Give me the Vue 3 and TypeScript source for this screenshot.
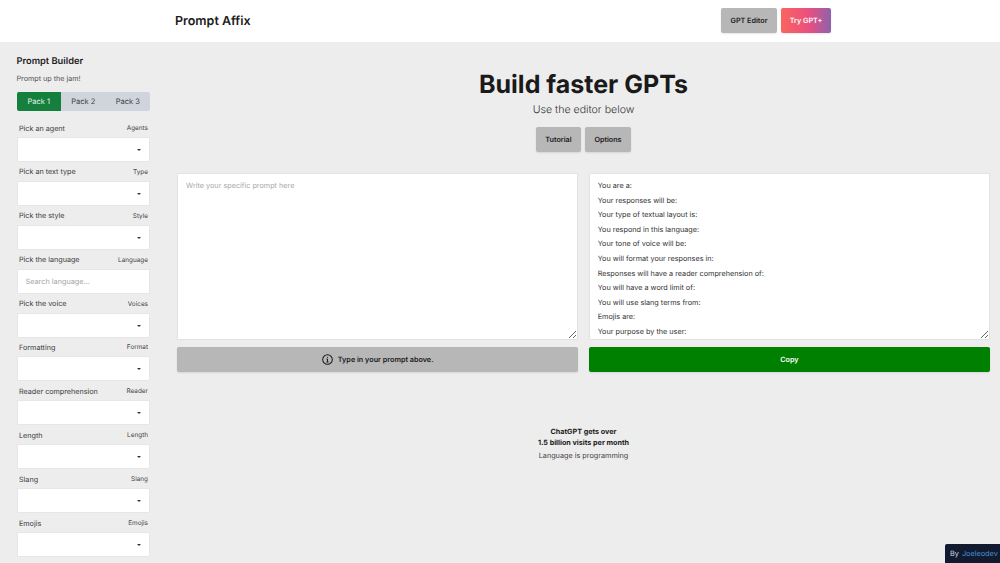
<script setup lang="ts">
interface Field { label: string; tag: string; input?: boolean }
const packs: string[] = ['Pack 1', 'Pack 2', 'Pack 3']
const fields: Field[] = [
  { label: 'Pick an agent', tag: 'Agents' },
  { label: 'Pick an text type', tag: 'Type' },
  { label: 'Pick the style', tag: 'Style' },
  { label: 'Pick the language', tag: 'Language', input: true },
  { label: 'Pick the voice', tag: 'Voices' },
  { label: 'Formatting', tag: 'Format' },
  { label: 'Reader comprehension', tag: 'Reader' },
  { label: 'Length', tag: 'Length' },
  { label: 'Slang', tag: 'Slang' },
  { label: 'Emojis', tag: 'Emojis' },
]
const output: string = [
  'You are a:',
  'Your responses will be:',
  'Your type of textual layout is:',
  'You respond in this language:',
  'Your tone of voice will be:',
  'You will format your responses in:',
  'Responses will have a reader comprehension of:',
  'You will have a word limit of:',
  'You will use slang terms from:',
  'Emojis are:',
  'Your purpose by the user:',
].join('\n')
</script>

<template>
  <div class="page">
    <header class="topbar">
      <span class="brand">Prompt Affix</span>
      <div class="top-actions">
        <button class="btn grey top-btn editor">GPT Editor</button>
        <button class="btn gradient top-btn">Try GPT+</button>
      </div>
    </header>
    <div class="body">
      <aside class="sidebar">
        <h2 class="side-title">Prompt Builder</h2>
        <p class="side-sub">Prompt up the jam!</p>
        <div class="tabs">
          <span v-for="(p, i) in packs" :key="p" class="tab" :class="{ active: i === 0 }">{{ p }}</span>
        </div>
        <div class="fields">
          <div v-for="f in fields" :key="f.label" class="field">
            <div class="field-head">
              <span class="field-label">{{ f.label }}</span>
              <span class="field-tag">{{ f.tag }}</span>
            </div>
            <input v-if="f.input" class="box search" placeholder="Search language..." />
            <div v-else class="box select"><span class="caret"></span></div>
          </div>
        </div>
      </aside>
      <main class="main">
        <section class="hero">
          <h1 class="title">Build faster GPTs</h1>
          <p class="subtitle">Use the editor below</p>
          <div class="hero-actions">
            <button class="btn grey hero-btn">Tutorial</button>
            <button class="btn grey hero-btn">Options</button>
          </div>
        </section>
        <section class="editors">
          <div class="col">
            <textarea class="area" placeholder="Write your specific prompt here"></textarea>
            <button class="btn grey wide">
              <svg class="info" viewBox="0 0 24 24" width="11" height="11" fill="none" stroke="#1a1a1a" stroke-width="2.2">
                <circle cx="12" cy="12" r="10.5" />
                <path d="M12 11v6.5M9.5 17.5h5M9.8 11H12" />
                <circle cx="12" cy="7" r="1.2" fill="#1a1a1a" stroke="none" />
              </svg>
              Type in your prompt above.
            </button>
          </div>
          <div class="col">
            <textarea class="area filled" readonly :value="output"></textarea>
            <button class="btn green wide">Copy</button>
          </div>
        </section>
        <section class="stats">
          <p class="stat-strong">ChatGPT gets over<br />1.5 billion visits per month</p>
          <p class="stat-note">Language is programming</p>
        </section>
      </main>
    </div>
    <div class="credit">By <span class="credit-link">Joeleodev</span></div>
  </div>
</template>

<style>
html, body { margin: 0; overflow: hidden; }
</style>

<style scoped>
.page {
  position: relative;
  width: 1000px;
  height: 563px;
  overflow: hidden;
  background: #ededed;
  font-family: Inter, "Liberation Sans", sans-serif;
  color: #1a1a1a;
  text-rendering: geometricPrecision;
}
.topbar {
  height: 42px;
  background: #fff;
  display: flex;
  align-items: center;
  justify-content: space-between;
  padding: 0 169px 0 175px;
  box-sizing: border-box;
}
.brand { font-size: 12.5px; font-weight: 600; color: #1c1c1c; }
.top-actions { display: flex; gap: 4px; margin-top: -1px; }
.btn {
  border: none;
  border-radius: 2px;
  font-family: inherit;
  font-weight: 600;
  font-size: 7.2px;
  text-rendering: geometricPrecision;
  display: flex;
  align-items: center;
  justify-content: center;
  padding: 0;
  box-shadow: 0 1px 2px rgba(0, 0, 0, 0.1);
}
.grey { background: #b7b7b7; color: #1a1a1a; }
.top-btn { height: 25px; width: 56px; }
.gradient {
  width: 50px;
  color: #fff;
  background: linear-gradient(90deg, #f9655f, #ea4f7f 55%, #8d62ad);
}
.body { display: flex; }
.sidebar { width: 167px; padding: 14px 0 0 16.5px; box-sizing: border-box; flex: none; }
.side-title { margin: 0; font-size: 9.3px; font-weight: 600; line-height: 12px; color: #1c1c1c; }
.side-sub { margin: 5px 0 0; font-size: 7.2px; line-height: 12px; color: #555; }
.tabs {
  display: flex;
  width: 133.5px;
  height: 19px;
  margin-top: 7px;
  background: #d0d4dc;
  border-radius: 2px;
  overflow: hidden;
}
.tab {
  flex: 1;
  display: flex;
  align-items: center;
  justify-content: center;
  font-size: 7.5px;
  color: #3a3f48;
}
.tab.active { background: #15803d; color: #e8f3ec; }
.fields { margin-top: 8px; }
.field { height: 43.9px; width: 133px; }
.field-head {
  height: 18px;
  padding: 0 1.5px 0 2.5px;
  display: flex;
  align-items: center;
  justify-content: space-between;
}
.field-label { font-size: 7.2px; color: #3c3c3c; }
.field-tag { font-size: 6.4px; color: #444; }
.box {
  display: block;
  width: 100%;
  height: 25px;
  box-sizing: border-box;
  background: #fff;
  border: 1px solid #e6e6e6;
  border-radius: 1px;
}
.select { display: flex; align-items: center; justify-content: flex-end; padding-right: 8px; }
.caret {
  width: 0;
  height: 0;
  margin-top: 1px;
  border-left: 2px solid transparent;
  border-right: 2px solid transparent;
  border-top: 2px solid #333;
}
.search {
  font-family: inherit;
  font-size: 7.3px;
  text-rendering: geometricPrecision;
  padding: 0 8px;
  outline: none;
}
.search::placeholder { color: #a3a3a3; }
.main { flex: 1; min-width: 0; padding: 0 10px 0 10px; box-sizing: border-box; }
.hero { display: flex; flex-direction: column; align-items: center; padding-top: 29px; }
.title { margin: 0; font-size: 25px; line-height: 29px; font-weight: 700; color: #1a1a1a; }
.subtitle { margin: 3px 0 0; font-size: 10.6px; line-height: 14px; font-weight: 300; color: #333; }
.hero-actions { display: flex; gap: 4px; margin-top: 10px; }
.hero-btn { height: 25px; width: 45px; }
.hero-btn:last-child { width: 46px; }
.editors { display: flex; gap: 10.5px; margin-top: 21px; }
.col { flex: 1; min-width: 0; display: flex; flex-direction: column; gap: 7px; }
.area {
  display: block;
  width: 100%;
  height: 166.5px;
  box-sizing: border-box;
  background: #fff;
  border: 1px solid #e2e2e2;
  border-radius: 1px;
  padding: 5px 8px 4px;
  font-family: inherit;
  font-size: 7.26px;
  text-rendering: geometricPrecision;
  line-height: 14.6px;
  color: #333;
  resize: vertical;
  outline: none;
  overflow: hidden;
}
.area::placeholder { color: #a9a9a9; }
.wide { width: 100%; height: 25px; gap: 5px; font-size: 7.24px; }
.green { background: #008000; color: #fff; }
.stats { text-align: center; margin-top: 54px; }
.stat-strong { margin: 0; font-size: 7.2px; font-weight: 700; line-height: 11px; color: #1c1c1c; }
.stat-note { margin: 2.5px 0 0; font-size: 7.27px; line-height: 12px; color: #444; }
.credit {
  position: absolute;
  right: 0;
  bottom: 0;
  width: 55px;
  height: 19px;
  box-sizing: border-box;
  padding-left: 5px;
  display: flex;
  align-items: center;
  gap: 3px;
  background: #111a2e;
  border-radius: 2px 0 0 0;
  color: #d7dbe2;
  font-size: 7.3px;
}
.credit-link { color: #4a90d0; }
</style>
